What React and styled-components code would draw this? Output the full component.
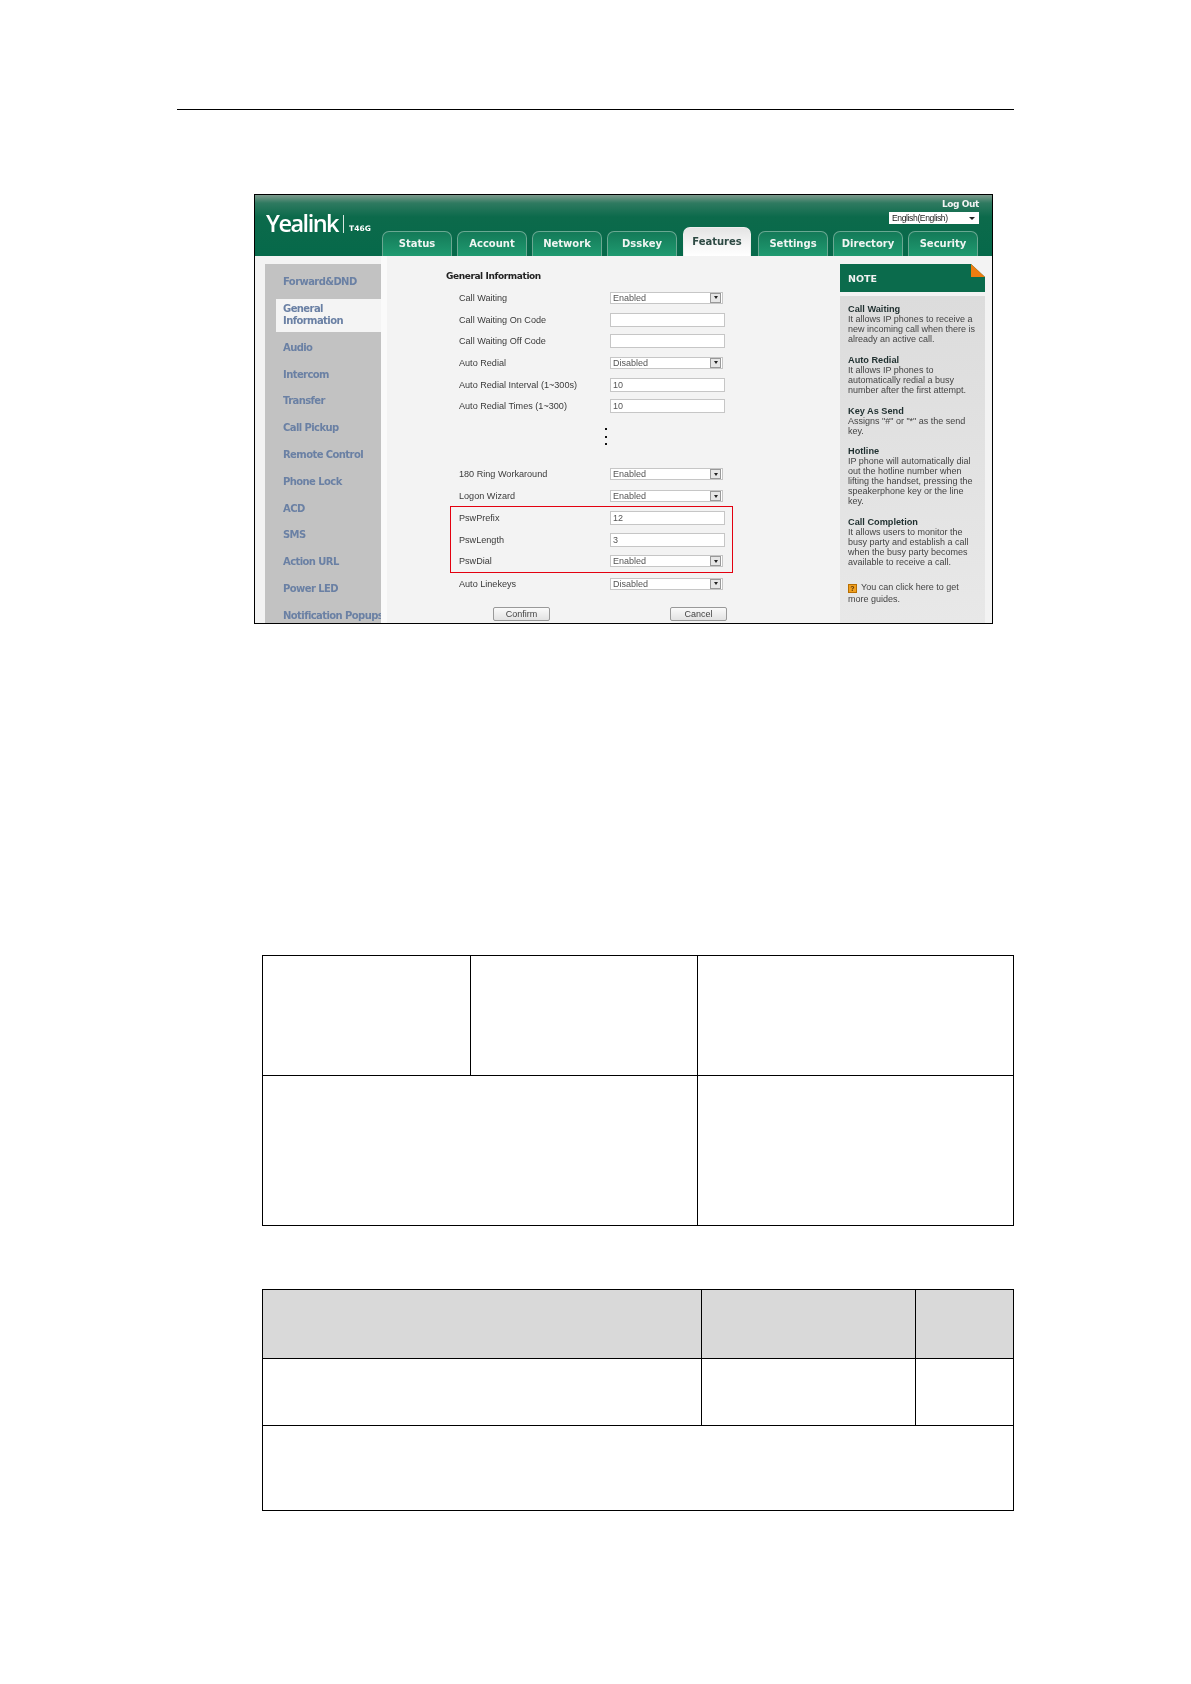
import React from 'react'
import styled, { createGlobalStyle } from 'styled-components'

const GlobalStyle = createGlobalStyle`
  html, body { margin: 0; padding: 0; background: #fff; }
`

const LABEL_FONT = '"Liberation Sans", Arial, sans-serif'
const BOLD_FONT = '"DejaVu Sans", Verdana, sans-serif'

const Page = styled.div`
  width: 1191px;
  height: 1684px;
  background: #fff;
  padding-top: 109px;
  box-sizing: border-box;
  overflow: hidden;
`

const HeaderRule = styled.div`
  width: 837px;
  height: 1px;
  margin-left: 177px;
  background: #000;
`

const Shot = styled.div`
  width: 737px;
  height: 428px;
  margin: 84px 0 0 254px;
  border: 1px solid #000;
  background: #f3f3f3;
  display: flex;
  flex-direction: column;
  overflow: hidden;
  filter: blur(0.4px);
`

const TopBar = styled.div`
  height: 61px;
  flex-shrink: 0;
  display: grid;
  grid-template-columns: 127px 1fr;
  background: linear-gradient(180deg, #7d9a8d 0, #2f7a60 8px, #0c6a4b 22px, #06694a 100%);
`

const LogoBox = styled.div`
  display: flex;
  align-items: flex-start;
  padding: 14px 0 0 11px;
  color: #fff;
`

const LogoWord = styled.span`
  font: 600 23.5px/28px "Open Sans", sans-serif;
  letter-spacing: -1.5px;
`

const LogoDivider = styled.span`
  width: 1px;
  height: 18px;
  margin: 6px 5px 0 5px;
  background: #d8e6e0;
`

const LogoModel = styled.span`
  font: 700 7.5px/10px ${BOLD_FONT};
  margin-top: 15px;
`

const TopRight = styled.div`
  display: flex;
  flex-direction: column;
  align-items: flex-end;
`

const LogOut = styled.div`
  font: 700 9px/12px ${BOLD_FONT};
  letter-spacing: -0.4px;
  color: #f4f4f4;
  margin: 3px 13px 0 0;
`

const LanguageSelect = styled.div`
  width: 90px;
  height: 12px;
  margin: 2px 13px 0 0;
  box-sizing: border-box;
  background: #fff;
  display: flex;
  align-items: center;
  justify-content: space-between;
  padding: 0 4px 0 3px;
  font: 8.6px/12px ${LABEL_FONT};
  letter-spacing: -0.4px;
  color: #222;
`

const LanguageArrow = styled.span`
  border-top: 3px solid #222;
  border-left: 3px solid transparent;
  border-right: 3px solid transparent;
`

const Tabs = styled.div`
  display: flex;
  align-self: flex-start;
  align-items: flex-end;
  gap: 5px;
  margin-top: auto;
`

const Tab = styled.div`
  width: ${props => props.$active ? 68 : 70}px;
  height: ${props => props.$active ? 29 : 25}px;
  box-sizing: border-box;
  margin: ${props => props.$active ? '0 2px 0 1px' : '0'};
  border: 1px solid ${props => props.$active ? '#eee' : '#6aa892'};
  border-bottom: 0;
  border-radius: 7px 7px 0 0;
  background: ${props => props.$active
    ? 'linear-gradient(180deg, #e4e4e4 0, #f6f6f6 60%, #fff 100%)'
    : 'linear-gradient(180deg, #147a58 0, #1f9a70 100%)'};
  color: ${props => props.$active ? '#2e4a44' : '#f0f5f2'};
  font: 700 10px/${props => props.$active ? 27 : 24}px ${BOLD_FONT};
  text-align: center;
  white-space: nowrap;
`

const Content = styled.div`
  flex: 1;
  display: flex;
  min-height: 0;
`

const Nav = styled.div`
  width: 116px;
  margin: 8px 0 0 10px;
  padding-top: 5px;
  background: #c2c2c2;
  display: flex;
  flex-direction: column;
  flex-shrink: 0;
`

const NavItem = styled.div`
  height: ${props => props.$active ? 33 : 26.8}px;
  margin: ${props => props.$active ? '3px 0 3px 11px' : '0'};
  padding: ${props => props.$active ? '4px 0 0 7px' : '0 0 0 18px'};
  box-sizing: border-box;
  flex-shrink: 0;
  background: ${props => props.$active ? '#f4f4f4' : 'transparent'};
  color: #6a80a4;
  font: 700 10px/${props => props.$active ? '12px' : '26.8px'} ${BOLD_FONT};
  letter-spacing: -0.58px;
  white-space: nowrap;
`

const Form = styled.div`
  width: 447px;
  margin-left: 6px;
  padding-top: 9px;
  box-sizing: border-box;
  flex-shrink: 0;
  background: #f3f3f3;
  box-shadow: -6px 0 0 #fafafa;
`

const FormTitle = styled.div`
  height: 22px;
  padding-left: 59px;
  font: 700 9px/22px ${BOLD_FONT};
  letter-spacing: -0.4px;
  color: #222;
`

const Row = styled.div`
  height: 21.7px;
  padding-left: ${props => props.$inset ? 8 : 72}px;
  display: flex;
  align-items: center;
`

const RowLabel = styled.div`
  width: 151px;
  flex-shrink: 0;
  font: 9.1px/12px ${LABEL_FONT};
  color: #3a3a3a;
  white-space: nowrap;
`

const Field = styled.div`
  width: ${props => props.$select ? 113 : 115}px;
  height: ${props => props.$select ? 12 : 14}px;
  box-sizing: border-box;
  padding: 0 1px 0 2px;
  background: #fff;
  border: 1px solid #c6c6c6;
  display: flex;
  align-items: center;
  justify-content: space-between;
  font: 9px/12px ${LABEL_FONT};
  color: #555;
`

const SelectButton = styled.span`
  width: 11px;
  height: 10px;
  box-sizing: border-box;
  border: 1px solid #999;
  background: #e6e6e6;
  display: flex;
  align-items: center;
  justify-content: center;

  &::after {
    content: '';
    border-top: 3px solid #222;
    border-left: 2.5px solid transparent;
    border-right: 2.5px solid transparent;
  }
`

const Ellipsis = styled.div`
  height: 46.5px;
  margin-left: 218px;
  padding-top: 11px;
  box-sizing: border-box;
  display: flex;
  flex-direction: column;
  gap: 5.5px;
`

const Dot = styled.span`
  width: 2px;
  height: 2px;
  background: #111;
`

const Highlight = styled.div`
  width: 283px;
  height: 67px;
  margin: -1px 0 0 63px;
  box-sizing: border-box;
  border: 1px solid #e3000f;
`

const Actions = styled.div`
  display: flex;
  margin-top: 12px;
  padding-left: 106px;
  gap: 120px;
`

const FormButton = styled.div`
  width: 57px;
  height: 14px;
  box-sizing: border-box;
  border: 1px solid #999;
  border-radius: 2px;
  background: linear-gradient(180deg, #fafafa, #e2e2e2);
  font: 9px/12px ${LABEL_FONT};
  color: #444;
  text-align: center;
`

const Note = styled.div`
  width: 145px;
  margin: 8px 0 0 6px;
  flex-shrink: 0;
  display: flex;
  flex-direction: column;
`

const NoteHead = styled.div`
  height: 28px;
  flex-shrink: 0;
  position: relative;
  padding-left: 8px;
  background: #0b6b4c;
  clip-path: polygon(0 0, 131px 0, 145px 13px, 145px 100%, 0 100%);
  color: #f2f2f2;
  font: 700 9.5px/30px ${BOLD_FONT};

  &::after {
    content: '';
    position: absolute;
    top: 0;
    right: 0;
    width: 14px;
    height: 13px;
    background: #ee7d11;
  }
`

const NoteBody = styled.div`
  flex: 1;
  margin-top: 4px;
  padding: 8px 0 0 8px;
  background: linear-gradient(180deg, #dcdcdc, #e8e8e8);
  font: 9px/10px ${LABEL_FONT};
  color: #444;
`

const NoteBlock = styled.div`
  margin-bottom: 10.8px;
  white-space: pre-line;
`

const NoteTitle = styled.div`
  font: 700 9.2px/10px ${LABEL_FONT};
  color: #1f2f2f;
`

const GuideLine = styled.div`
  margin-top: 14px;
  line-height: 12px;
`

const GuideIcon = styled.span`
  display: inline-block;
  width: 9px;
  height: 9px;
  margin-right: 4px;
  border: 1px solid #b86e00;
  box-sizing: border-box;
  background: #f0a020;
  font: 700 7px/7px ${LABEL_FONT};
  color: #5a3000;
  text-align: center;
  vertical-align: -1px;
`

const GridTable = styled.div`
  margin: ${props => props.$top}px 0 0 262px;
  display: grid;
  grid-template-columns: ${props => props.$columns};
  grid-template-rows: ${props => props.$rows};
  width: max-content;
  border-top: 1px solid #000;
  border-left: 1px solid #000;
`

const Cell = styled.div`
  border-right: 1px solid #000;
  border-bottom: 1px solid #000;
  grid-column: span ${props => props.$span || 1};
  background: ${props => props.$head ? '#d9d9d9' : '#fff'};
`

const TABS = ['Status', 'Account', 'Network', 'Dsskey', 'Features', 'Settings', 'Directory', 'Security']

const NAV_ITEMS = [
  'Forward&DND', 'General Information', 'Audio', 'Intercom', 'Transfer', 'Call Pickup',
  'Remote Control', 'Phone Lock', 'ACD', 'SMS', 'Action URL', 'Power LED', 'Notification Popups',
]

const NOTES = [
  ['Call Waiting', 'It allows IP phones to receive a\nnew incoming call when there is\nalready an active call.'],
  ['Auto Redial', 'It allows IP phones to\nautomatically redial a busy\nnumber after the first attempt.'],
  ['Key As Send', 'Assigns "#" or "*" as the send\nkey.'],
  ['Hotline', 'IP phone will automatically dial\nout the hotline number when\nlifting the handset, pressing the\nspeakerphone key or the line\nkey.'],
  ['Call Completion', 'It allows users to monitor the\nbusy party and establish a call\nwhen the busy party becomes\navailable to receive a call.'],
]

const FormRow = ({ label, value, select, inset }) =>
  <Row $inset={inset}>
    <RowLabel>{label}</RowLabel>
    <Field $select={select}>
      {value}
      {select && <SelectButton />}
    </Field>
  </Row>

const Screenshot = () =>
  <Shot>
    <TopBar>
      <LogoBox>
        <LogoWord>Yealink</LogoWord>
        <LogoDivider />
        <LogoModel>T46G</LogoModel>
      </LogoBox>
      <TopRight>
        <LogOut>Log Out</LogOut>
        <LanguageSelect>English(English)<LanguageArrow /></LanguageSelect>
        <Tabs>
          {TABS.map(tab => <Tab key={tab} $active={tab === 'Features'}>{tab}</Tab>)}
        </Tabs>
      </TopRight>
    </TopBar>
    <Content>
      <Nav>
        {NAV_ITEMS.map(item =>
          <NavItem key={item} $active={item === 'General Information'}>
            {item === 'General Information' ? <>General<br />Information</> : item}
          </NavItem>
        )}
      </Nav>
      <Form>
        <FormTitle>General Information</FormTitle>
        <FormRow label='Call Waiting' value='Enabled' select />
        <FormRow label='Call Waiting On Code' />
        <FormRow label='Call Waiting Off Code' />
        <FormRow label='Auto Redial' value='Disabled' select />
        <FormRow label='Auto Redial Interval (1~300s)' value='10' />
        <FormRow label='Auto Redial Times (1~300)' value='10' />
        <Ellipsis><Dot /><Dot /><Dot /></Ellipsis>
        <FormRow label='180 Ring Workaround' value='Enabled' select />
        <FormRow label='Logon Wizard' value='Enabled' select />
        <Highlight>
          <FormRow inset label='PswPrefix' value='12' />
          <FormRow inset label='PswLength' value='3' />
          <FormRow inset label='PswDial' value='Enabled' select />
        </Highlight>
        <FormRow label='Auto Linekeys' value='Disabled' select />
        <Actions>
          <FormButton>Confirm</FormButton>
          <FormButton>Cancel</FormButton>
        </Actions>
      </Form>
      <Note>
        <NoteHead>NOTE</NoteHead>
        <NoteBody>
          {NOTES.map(([title, text]) =>
            <NoteBlock key={title}>
              <NoteTitle>{title}</NoteTitle>
              {text}
            </NoteBlock>
          )}
          <GuideLine>
            <GuideIcon>?</GuideIcon>You can click here to get<br />more guides.
          </GuideLine>
        </NoteBody>
      </Note>
    </Content>
  </Shot>

export default function App() {
  return (
    <Page>
      <GlobalStyle />
      <HeaderRule />
      <Screenshot />
      <GridTable $top={331} $columns='208px 227px 316px' $rows='120px 150px'>
        <Cell />
        <Cell />
        <Cell />
        <Cell $span={2} />
        <Cell />
      </GridTable>
      <GridTable $top={63} $columns='439px 214px 98px' $rows='69px 67px 85px'>
        <Cell $head />
        <Cell $head />
        <Cell $head />
        <Cell />
        <Cell />
        <Cell />
        <Cell $span={3} />
      </GridTable>
    </Page>
  )
}
